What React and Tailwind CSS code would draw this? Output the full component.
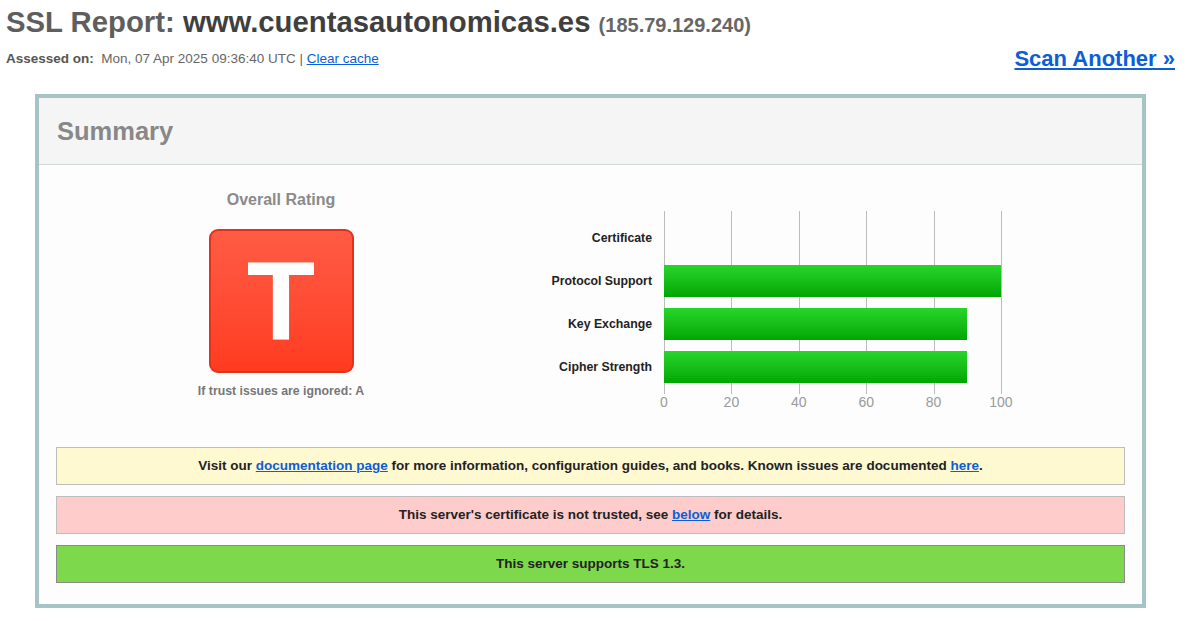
import React from 'react';

const ROWS = [
  { label: 'Certificate', value: 0 },
  { label: 'Protocol Support', value: 100 },
  { label: 'Key Exchange', value: 90 },
  { label: 'Cipher Strength', value: 90 },
];

const TICKS = [0, 20, 40, 60, 80, 100];
const CHART_W = 337;

function Chart() {
  return (
    <div className="flex mt-[21px]">
      {/* Row labels */}
      <div className="w-[129px] flex flex-col gap-[11px] py-[11px]">
        {ROWS.map((r) => (
          <div key={r.label} className="h-[32px] flex items-center justify-end text-[12.3px] font-bold text-[#222]">
            {r.label}
          </div>
        ))}
      </div>

      <div className="ml-[12px] w-[338px]">
        <div className="relative h-[183px] flex flex-col gap-[11px] py-[11px]">
          {/* grid lines */}
          {TICKS.map((t, i) => (
            <div
              key={t}
              className="absolute top-0 bottom-0 w-px bg-[#bcbcbc]"
              style={{ left: Math.round(i * (CHART_W / 5)) }}
            />
          ))}
          {ROWS.map((r) => (
            <div key={r.label} className="relative h-[32px]">
              {r.value > 0 && (
                <div
                  className="h-full bg-linear-to-b from-[#27d62a] to-[#00a600]"
                  style={{ width: Math.round((CHART_W * r.value) / 100) }}
                />
              )}
            </div>
          ))}
        </div>
        {/* axis */}
        <div className="-ml-[20px] w-[377px] flex justify-between">
          {TICKS.map((t) => (
            <div key={t} className="w-[40px] text-center text-[14px] leading-[16px] text-[#9a9a9a]">
              {t}
            </div>
          ))}
        </div>
      </div>
    </div>
  );
}

export default function App() {
  return (
    <div className="min-h-screen bg-white pl-[6px] pr-[12px] font-['Liberation_Sans',Arial,sans-serif]">
      {/* Title */}
      <h1 className="pt-[6px] h-[38px] text-[29.3px] leading-[32px] font-bold text-[#5e5e5e] whitespace-nowrap">
        SSL Report: <span className="text-[#3f3f3f]">www.cuentasautonomicas.es</span>{' '}
        <span className="text-[20px] leading-none text-[#666]">(185.79.129.240)</span>
      </h1>

      <div className="mt-[8px] h-[26px] flex items-center justify-between">
        <div className="text-[13.5px] leading-[16px] text-[#666]">
          <span className="font-bold text-[#555]">Assessed on:</span>&nbsp;&nbsp;Mon, 07 Apr 2025 09:36:40 UTC |{' '}
          <a href="#" className="text-[#0b5ed7] underline">Clear cache</a>
        </div>
        <a href="#" className="text-[22px] leading-[26px] font-bold text-[#0b5ed7] underline">
          Scan Another »
        </a>
      </div>

      {/* Summary box */}
      <div className="mt-[22px] ml-[29px] w-[1111px] border-4 border-[#a6c3c6]">
        <div className="h-[67px] bg-[#f5f5f5] border-b border-[#cfd9d9] flex items-center pl-[18px]">
          <h2 className="text-[25.5px] font-bold text-[#888]">Summary</h2>
        </div>

        <div className="bg-[#fdfdfd] pt-[25px] pb-[21px]">
          <div className="flex h-[220px]">
            {/* Overall rating */}
            <div className="w-[484px] flex flex-col items-center">
              <div className="text-[16px] leading-[20px] font-bold text-[#8a8a8a]">Overall Rating</div>
              <div className="mt-[19px] w-[145px] h-[144px] rounded-[9px] border-2 border-[#e2321c] bg-linear-to-b from-[#ff5b44] to-[#ff3b1f] flex items-center justify-center">
                <span className="text-[112px] leading-none font-bold text-white">T</span>
              </div>
              <div className="mt-[10px] text-[12.3px] leading-[16px] font-bold text-[#777]">
                If trust issues are ignored: A
              </div>
            </div>

            <Chart />
          </div>

          {/* Notices */}
          <div className="mt-[37px] mx-[17px] flex flex-col gap-[11px] text-[13.5px] font-bold text-[#222]">
            <div className="h-[38px] flex items-center justify-center bg-[#fff9d2] border border-[#bdbdbd]">
              <span>
                Visit our <a href="#" className="text-[#0b5ed7] underline">documentation page</a> for more information, configuration guides, and books. Known issues are documented{' '}
                <a href="#" className="text-[#0b5ed7] underline">here</a>.
              </span>
            </div>
            <div className="h-[38px] flex items-center justify-center bg-[#ffcccc] border border-[#bdbdbd]">
              <span>
                This server's certificate is not trusted, see <a href="#" className="text-[#0b5ed7] underline">below</a> for details.
              </span>
            </div>
            <div className="h-[38px] flex items-center justify-center bg-[#7ed84c] border border-[#8a8a8a]">
              This server supports TLS 1.3.
            </div>
          </div>
        </div>
      </div>
    </div>
  );
}
